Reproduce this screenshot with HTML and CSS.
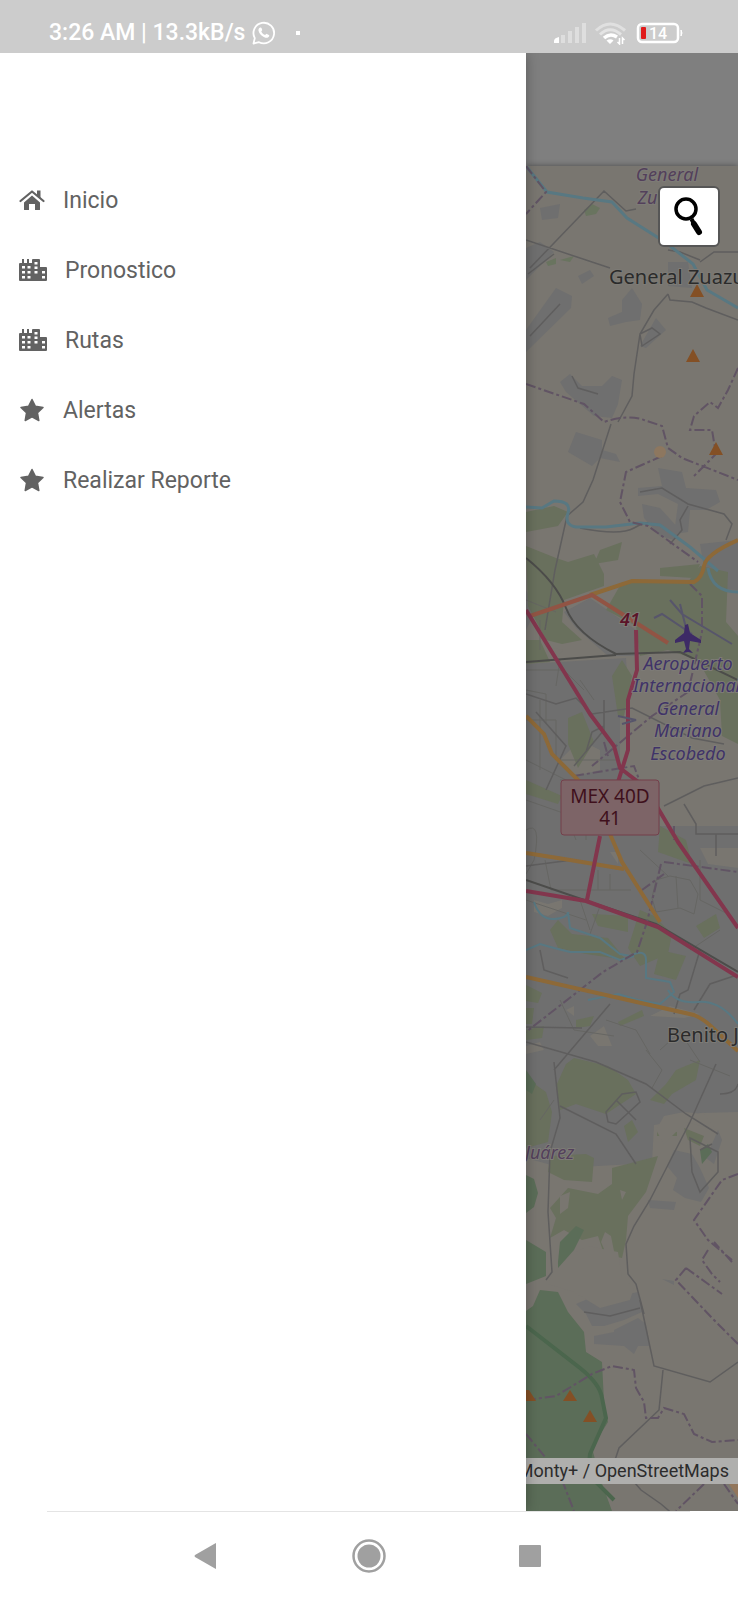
FILE: index.html
```html
<!DOCTYPE html>
<html lang="es">
<head>
<meta charset="utf-8">
<meta name="viewport" content="width=device-width, initial-scale=1">
<title>Inicio</title>
<link rel="stylesheet" href="styles.css">
</head>
<body>
<div class="screen">
  <header class="status">
    <span class="status-text">3:26 AM | 13.3kB/s</span>
    <svg class="whatsapp" viewBox="0 0 24 24" aria-hidden="true">
      <path d="M1.5 22.5l1.3-5.4A10.3 10.3 0 1 1 7 21.2z" fill="none" stroke="#fff" stroke-width="1.8" stroke-linejoin="round"/>
      <path d="M8.2 6.500c.7-.3 1.100 0 1.300.6l.7 1.700c.2.500-.5 1.200-.9 1.600.8 1.700 2.100 2.900 3.900 3.700.5-.5 1.100-1.400 1.700-1.200l2 1c.6.300.4 1.100.1 1.700-.7 1.200-2.300 1.500-3.600 1.100-3.400-1-6.200-3.600-6.900-6.900-.3-1.400.4-2.700 1.700-3.300z" fill="#fff"/>
    </svg>
    <span class="dot"></span>
    <svg class="signal" viewBox="0 0 34 24" aria-hidden="true">
      <path d="M1 22v-2q0-3 5-4v6z" fill="#fff"/>
      <path d="M8 14h4v8H8zM15 10h4v12h-4zM22 6h4v16h-4zM29 2h4v20h-4z" fill="#dedede"/>
    </svg>
    <svg class="wifi" viewBox="0 0 34 24" aria-hidden="true">
      <path d="M2 9.500Q16-3.500 31 9.500" fill="none" stroke="#e0e0e0" stroke-width="3"/>
      <path d="M6 13.500Q16 4 27 13.500" fill="none" stroke="#e4e4e4" stroke-width="3"/>
      <path d="M10 17Q16 11.500 23 16" fill="none" stroke="#fff" stroke-width="3.500"/>
      <path d="M12.500 19.500q4-2.500 7 0L16 23z" fill="#fff"/>
      <path d="M25.500 17v6l-2-2M28.500 23v-6l2 2" fill="none" stroke="#fff" stroke-width="1.500"/>
    </svg>
    <svg class="battery" viewBox="0 0 48 22" role="img" aria-label="Batería 14">
      <rect x="2" y="2" width="40" height="18" rx="4" fill="none" stroke="#fff" stroke-width="2.500"/>
      <path d="M45 8q2 3 0 6z" fill="#fff" stroke="#fff"/>
      <rect x="5" y="5" width="5" height="12" rx="1" fill="#e01a1a"/>
      <text x="13" y="17" class="battery-text">14</text>
    </svg>
  </header>

  <div class="body">
    <nav class="drawer">
      <ul class="menu">
        <li><a href="#inicio">
          <svg class="icon" viewBox="0 0 26 26" aria-hidden="true"><path d="M13 8.500L21 15.500v7q0 .5-.5.500H16v-6h-6v6H5.500q-.5 0-.5-.5v-7z"/><path d="M1.500 14L13 4.500 24.500 14" fill="none" stroke="currentColor" stroke-width="2.200" stroke-linecap="round" stroke-linejoin="round"/><path d="M18 3.500h3.500V12L18 9z"/></svg>
          <span>Inicio</span></a></li>
        <li><a href="#pronostico">
          <svg class="icon city" viewBox="0 0 28 26" aria-hidden="true"><path fill-rule="evenodd" d="M1 6h2V2h2v4h3V2h2v4h3V3q0-1 1-1h6q1 0 1 1v7h6q1 0 1 1v12q0 1-1 1H1q-1 0-1-1V7q0-1 1-1zM3 9v2.500h3V9zM8.500 9v2.500h3V9zM3 14v2.500h3V14zM8.500 14v2.500h3V14zM3 19v2.500h3V19zM8.500 19v2.500h3V19zM15.500 5v2.500h3V5zM15.500 9.500V12h3V9.500zM15.500 14v2.500h3V14zM23 14v2.500h3V14zM23 19v2.500h3V19z"/></svg>
          <span>Pronostico</span></a></li>
        <li><a href="#rutas">
          <svg class="icon city" viewBox="0 0 28 26" aria-hidden="true"><path fill-rule="evenodd" d="M1 6h2V2h2v4h3V2h2v4h3V3q0-1 1-1h6q1 0 1 1v7h6q1 0 1 1v12q0 1-1 1H1q-1 0-1-1V7q0-1 1-1zM3 9v2.500h3V9zM8.500 9v2.500h3V9zM3 14v2.500h3V14zM8.500 14v2.500h3V14zM3 19v2.500h3V19zM8.500 19v2.500h3V19zM15.500 5v2.500h3V5zM15.500 9.500V12h3V9.500zM15.500 14v2.500h3V14zM23 14v2.500h3V14zM23 19v2.500h3V19z"/></svg>
          <span>Rutas</span></a></li>
        <li><a href="#alertas">
          <svg class="icon" viewBox="0 0 26 26" aria-hidden="true"><path d="M13 2.500l3.400 6.800 7.600 1.200-5.500 5.300 1.300 7.700-6.800-3.600-6.800 3.600 1.300-7.700L2 10.500l7.600-1.200z" stroke="currentColor" stroke-width="1.500" stroke-linejoin="round"/></svg>
          <span>Alertas</span></a></li>
        <li><a href="#reporte">
          <svg class="icon" viewBox="0 0 26 26" aria-hidden="true"><path d="M13 2.500l3.400 6.800 7.600 1.200-5.500 5.300 1.300 7.700-6.800-3.600-6.800 3.600 1.300-7.700L2 10.500l7.600-1.200z" stroke="currentColor" stroke-width="1.500" stroke-linejoin="round"/></svg>
          <span>Realizar Reporte</span></a></li>
      </ul>
    </nav>

    <main class="content">
      <div class="toolbar"></div>
      <div class="map">
        <svg class="map-art" viewBox="526 166 212 1345" preserveAspectRatio="xMinYMin slice" role="img" aria-label="Mapa de Monterrey">
          <rect x="526" y="166" width="212" height="1345" fill="#797670"/>

          <g class="urban">
            <path d="M526 248l14-6 14 10-28 28zM556 288l16 8-1 12-45 44v-22zM560 382l10-8 12 12 20 0 10-10 10 4-4 24-6 14-18-2-28-24zM622 300l10-12 10 16-2 16-14 2-16 4-2 -8 14-6zM540 208l20-4-2 14-16 2zM578 276l12-6 4 6-12 8zM668 262l20 0 4 26-24-2zM576 432l26 8 0 10 14 4 4 8-20-4-8 8-24-14zM656 318l10 12-20 18-6-2z"/>
            <path d="M658 468l24 4 4 16 30 2 4 12-14 8-16 0-2 22-14 2 4-30-20-10-20 2 0-8 24-2zM642 504l18 4 20 22-6 10-14-4-16-18z"/>
            <path d="M564 612l26-14 46 32v26l-28 0-32-28zM526 590l10 20-10 20zM700 544l38-4v50q-26 0-34-22zM526 664l100-6 2 30-8 30v50l20 12 20 2v44h78v286l-38 1-20 8-26 4-2 38-90 5-36-10z"/>
            <path d="M674 1150l18 4 8 14 9 20-8 14-16-4-12-8 4-12-10-12zM648 1200l28 2-2 8-24-2zM718 1130l4 10-8 24-8-6zM576 1304l14-6 8-10 12 10 28-6 4 20-18 8-20 6-12 0-6-12zM614 1330l24-12 8 6 4 22-12 0-4 8-10-8-30-2 0-8 20-4zM662 1279l12 2 0 4z"/>
          </g>

          <g class="land">
            <path d="M534 900l14 4 14-4 0 8-14 8-14-4zM692 790l46-10v36h-42l-10-12zM700 848h38v20l-30-4zM650 1016l20-10 30 8-16 4zM590 1036l14-10 8 20-14 0zM526 1046l14-4 4 8-18 4zM566 1010l8-4 0 10zM610 852l8 0 0 12zM560 760l20-20 20 10 0 20-24 6z"/>
            <path d="M545 654l8-6 10 2-8 10z"/>
          </g>

          <g class="field">
            <path d="M526 512l28-6 14 6-10 14-32 6zM526 546l30 12 12 4 26-8 10 20 0 12-40 14-2 22 20 18-20 4-16-4-18-34zM600 550l22-8-4 18-24 4zM622 582l66 0 12-16 28 6-2 50 12 14v108l-16-8-2-36-22-40-30-10-28 6-4-30-30-16zM660 568l40-4-6 14-34-2zM526 640l14 0 10 22-24 2zM622 660l10 16-8 40-6 0-6-40zM568 718l14-6 12 30-16 26-10-24zM526 780l36 16-4 8-32-10zM660 826l26 14 6 24-34-12zM640 910l14 6 18 18-4 20-28 12-12-18zM550 930l8-10 14 14 36 4 18 22-40-6-28-6zM592 914l36 2 0 16-30-6zM696 926l20-12 4 14-16 10zM660 950l26 6-10 24-22-6z"/>
            <path d="M526 985l16 8-4 10-12-2zM576 1020l18-4-4 10-14 2zM618 1022l24-12 2 6-24 10zM526 1030l18-4-2 12-16 2zM566 1064l8-6 34 8 20 14 8 14-30 20-30-10-16 6-4-24zM526 1078l20 14 6 20-4 30-22 6zM526 1008l8 0-2 16-6 0zM666 1084l10-14 24-10-4 20-24 14-8 10-14-4zM624 1126l8-6 6 12-10 10zM550 1156l36-2 8 4-2 24-28-2-16-8zM612 1168l46-12-12 36-18 24-2 24-4 18-18-4-6-18-16 4-18-10-14 8 6-20-6-10 18-20 30 6 14-10zM657 1130l20 2 0 4-20 0zM684 1128l20 8-4 10-12-6z"/>
          </g>

          <g class="land">
            <path d="M605 1232l6 4 4 20-8 0-6-14zM620 1190l6 2-4 8zM560 1196l10-4-2 16-8 6zM548 1284l10-22 14-8 16-8 30 6 4 26 12 10-4 12-30 8-26-16zM664 1116l20-4 20 2 12 16-30-8-22 22-8-14z"/>
          </g>

          <g class="forest">
            <path d="M526 1175l8 4 4 14-4 14-8 6zM526 1240l20 12 0 24-20 8zM533 1306l7-16 18 2 10 20 16 20 2 20 16 10 2 40 4 20-16 26 8 30 12 33h-86v-200zM558 1262l2-20 16-16 8 4-10 20-16 18zM526 1070l10 14-4 10-6-4zM700 1150l8-6 4 8-10 12z"/>
            <path class="scrub" d="M584 210l8-6 8 4-4 6-10 2zM546 262l10-4 0 6-8 2zM560 260l14-4-4 6z"/>
          </g>

          <g class="blocks">
            <path d="M526 670h38l20 20M526 720h30v40h60M540 700v70M526 760l60 30v50M580 680l14 20M560 780h60M526 800l40 14 10 26M526 830q16-10 8 30l-8 14M545 860l6 30h80M598 870v20M610 874v16M640 850l28 26M526 900l60 20M606 1020l30 10 14 24M660 1050l20-18 20 30M646 1050l16 20-10 18M540 1120l14-20M690 1060l40 16M560 1000l14 30 40 6"/>
            <path d="M700 860v40l28 14M580 900l10 30M600 906l-10 28M690 950l30-20M656 880l14-4 20 4 8 14-4 20-14-6-24 4-4-14zM676 876l2 32M526 600l30 12M540 620v30M526 690l20 4v30M560 660l-4 26"/>
          </g>
          <g class="minor">
            <path d="M530 268L604 191l22 20 10-2M526 240l84 28M528 274l26-20M530 336l30-32M668 294l-14 16-14 24-6 40-2 22-14 26M668 294l2 6 22 2 14 6 32 12M700 262l14-10h24M640 334l12-6 8 6-18 12zM668 250l12 2 20 8M598 394l-20-6-6-12M611 424l-18 56-10 22-16 14-12 54-10 60M580 528q40 8 54 0t14-4M640 492l22-4 26 16 36 10 8 10-6 16M688 506l-8 14 2 10-12 14"/>
            <path d="M526 694l30 10 20-6 16 16 40-6 60 30 32 6M536 712l30 34-20 44M586 752l6-20 12-6M526 866l46-6M664 806l40-20 34-8M684 804l12 20v10h42M716 834v22M604 700v30l-30 36M700 950l-12 40-8 4-6 20M694 1010l16-26 24-8M540 950l4 20 24 8M554 1070l56-66M526 1027l56 1M526 1042l70 20 50 22 40 30 32 20M554 1062l6 56-10 34-2 60 4 60-6 8M560 1106l56 28 20 30M716 1064l-26 58-40 78-16 26-8 18 2 30 8 10 8 30M606 1112l16-18 14-2 4 10-24 22-8-2zM616 1100l20 20M690 1138l28 14v20l-18 20-8-20zM700 1150l12-6M720 1094q16 0 18-10M584 1312l26 4 30-8"/>
            <path d="M640 1300l14 66 56 16 28-20M663 1370l-4 40-40 38-4 12 26 30 20 14 14 12"/>
          </g>
          <path class="rail" d="M526 558q30 24 40 50t50 46l64-2 58 28M526 662l90-7M526 880l64 22 66 22 82 48"/>

          <path class="forest-line" d="M526 1326l54 42q20 16 22 30l4 20-16 36-2 20 26 26"/>
          <g class="water">
            <path d="M526 166l21 26 36 6 29 4 15 16 38 24 28 22 14 26 31 18M526 507l16 1 12-7q18 0 14 12t8 14h30l34-4 20 2 30 22 28 24M708 568q4 24 30 24"/>
            <path class="stream" d="M534 902q6 18 20 17t14-7l2 16 30 10 20 16 10 2q16-8 16 4t0 18l24 4 4 10-14 12-22-4-20-6-30 6M526 950l14-6 14 4 16 4h30l20 8 14-4M668 990q8 14 30 12t40 22"/>
          </g>

          <g class="border">
            <path d="M526 166l20 26-20 22M526 384l58 20 20 18q24-8 40-2l18 6 6 22 14 10 56 22M662 456l-36 16-6 30 10 20 18 4 50 36M738 368l-10 22-10 18-8-6-16 14-4 14 22 0 4 24-22 22M690 584l12 12 0 36-14 60-36 24-60 50M574 776l60-10 6 16M604 742l4 14M661 864l-14 58-10 30-34 20-77 60M664 862l74 10M674 826v14M642 890l22-16"/>
            <path d="M738 1174l-16 6-28 40 14 20 24 20M708 1250l-6 10 10 14 8 8M732 1262l-18-20M686 1268l36 26M686 1268l-10 12 36 38 26 26M526 1400l30-4 36-22 20-8 22 4 2 18 8 14 2 16h12l6-10 20 6 10 20 18 8 26-2M526 1434l20 24M562 1480l12 31M704 1484l-28 27M724 1484l14 20"/>
          </g>

          <path class="orange" d="M590 595l42-14 62 1q8-4 10-16t34-26M526 716l18 18 8 20 30 30M610 834l12 28 38 60M526 853l38 6 60 10M526 977l168 38q10 4 20 14l24 22"/>
          <path class="coral" d="M530 616l62-21 76 48"/>
          <path class="red" d="M526 610l64 104 24 32 6 22 26 20 32 54 60 86M636 630l1 40-9 30v50l-10 32M600 836l-13 64M526 891l60 10 72 26 80 50"/>
          <path d="M618 716l18 4-14 4M670 600l12 14 50 30M654 618l8-4 30 20M680 604l6 24" fill="none" stroke="#57556b" stroke-width="2"/>

          <g class="peak">
            <path d="M697 284l7 13h-14zM693 349l7 13h-14zM716 442l7 13h-14zM570 1390l7 11h-14zM590 1410l7 12h-14zM526 1390h3l7 11h-10z"/>
          </g>
          <circle cx="660" cy="452" r="6" fill="#8d775f"/>
          <path d="M729 1484h9v14z" fill="#92765b"/>
          <path d="M688 624l2 9 11 7v3l-11-2-1 8 4 4-5-1-5 1 3-4-2-8-9 2v-3l9-7 1-8z" fill="#3d2a66"/>

          <g class="place area">
            <text x="667" y="181">General</text>
            <text x="667" y="204">Zuazua</text>
            <text x="525" y="1159" class="left">Juárez</text>
          </g>
          <g class="place airport">
            <text x="688" y="670">Aeropuerto</text>
            <text x="633" y="692" class="left">Internacional</text>
            <text x="688" y="715">General</text>
            <text x="688" y="737">Mariano</text>
            <text x="688" y="760">Escobedo</text>
          </g>
          <g class="place town">
            <text x="609" y="284">General Zuazua</text>
            <text x="667" y="1042">Benito Juárez</text>
          </g>
          <text x="630" y="626" class="place ref">41</text>
          <rect x="561" y="780" width="98" height="55" rx="3" fill="#7d6467" stroke="#743f4b" stroke-width="1"/>
          <g class="place shield">
            <text x="610" y="803">MEX 40D</text>
            <text x="610" y="825">41</text>
          </g>
        </svg>
        <button class="search" type="button" aria-label="Buscar">
          <svg viewBox="0 0 40 40" aria-hidden="true"><circle cx="17" cy="12" r="10" fill="none" stroke="#000" stroke-width="3.500"/><path d="M22.500 22l2 4" stroke="#000" stroke-width="4"/><path d="M25 27l5 8" stroke="#000" stroke-width="6" stroke-linecap="round"/></svg>
        </button>
        <div class="attribution">Monty+ / OpenStreetMaps</div>
      </div>
    </main>
  </div>

  <footer class="system">
    <div class="divider"></div>
    <div class="keys">
      <button type="button" aria-label="Atrás"><svg viewBox="0 0 44 44" aria-hidden="true"><path d="M31 10v24q0 1.500-1 .5L10 23q-1-1 0-2L30 9.500q1-1 1 .5z"/></svg></button>
      <button type="button" aria-label="Inicio"><svg viewBox="0 0 44 44" aria-hidden="true"><circle cx="22" cy="22" r="11.500"/><circle cx="22" cy="22" r="15.500" fill="none" stroke="#a0a0a0" stroke-width="2.500"/></svg></button>
      <button type="button" aria-label="Recientes"><svg viewBox="0 0 44 44" aria-hidden="true"><rect x="10" y="11" width="22" height="22" rx="1"/></svg></button>
    </div>
  </footer>
</div>
</body>
</html>
```

FILE: styles.css
```css
* { box-sizing: border-box; }

body {
  margin: 0;
  background: #fff;
  font-family: Roboto, "Noto Sans", sans-serif;
}

button {
  padding: 0;
  border: 0;
  background: none;
}

svg { display: block; }

.screen {
  display: flex;
  flex-direction: column;
  min-height: 100vh;
}

/* Status bar */
.status {
  display: flex;
  align-items: center;
  height: 53px;
  padding: 13px 54px 0 49px;
  background: #ccc;
  color: #fff;
}

.status-text {
  font-size: 23px;
  font-weight: 500;
  line-height: 28px;
  white-space: nowrap;
}

.whatsapp {
  width: 24px;
  height: 24px;
  margin-left: 7px;
}

.dot {
  width: 4px;
  height: 4px;
  margin-left: 20px;
  background: #fff;
}

.signal {
  width: 34px;
  height: 24px;
  margin-left: auto;
}

.wifi {
  width: 34px;
  height: 24px;
  margin-left: 7px;
}

.battery {
  width: 48px;
  height: 22px;
  margin-left: 8px;
}

.battery-text {
  fill: #fff;
  font-size: 16px;
  font-weight: 500;
}

/* Drawer */
.body {
  display: flex;
  flex: 1;
  overflow: hidden;
}

.drawer {
  position: relative;
  z-index: 1;
  flex: 0 0 71.3%;
  padding-top: 112px;
  background: #fff;
  box-shadow: 0 0 12px rgba(0, 0, 0, 0.3);
}

.menu {
  margin: 0;
  padding: 0;
  list-style: none;
}

.menu a {
  display: flex;
  align-items: center;
  gap: 18px;
  height: 70px;
  padding: 0 19px;
  color: #626262;
  font-size: 23px;
  text-decoration: none;
}

.icon {
  width: 26px;
  height: 26px;
  fill: currentColor;
}

.city { width: 28px; }

/* Map */
.content {
  display: flex;
  flex: 1;
  flex-direction: column;
  min-width: 0;
}

.toolbar {
  height: 113px;
  background: #7f7f7f;
}

.map {
  position: relative;
  display: flex;
  flex: 1;
  flex-direction: column;
  background: #797670;
  box-shadow: 0 0 6px rgba(0, 0, 0, 0.4);
}

.map-art {
  flex: 1 0 auto;
  width: 100%;
}

.urban { fill: #6f6f6f; }
.land { fill: #797670; }
.field { fill: #69705d; }
.forest { fill: #5b6d58; }
.scrub { fill: #69745f; }

.minor, .blocks, .rail, .water, .border, .orange, .coral, .red, .forest-line { fill: none; }
.minor { stroke: #5f5e5e; stroke-width: 1.5; }
.blocks { stroke: #666663; stroke-width: 1; }
.rail { stroke: #4c4c4a; stroke-width: 2; }
.forest-line { stroke: #4b664d; stroke-width: 4; }
.water { stroke: #587882; stroke-width: 3; }
.stream { stroke-width: 2; }
.border { stroke: #615464; stroke-width: 2; stroke-dasharray: 10 3 3 3; }
.orange { stroke: #8d6938; stroke-width: 4; }
.coral { stroke: #915444; stroke-width: 4; }
.red { stroke: #82364d; stroke-width: 4; stroke-linejoin: round; }
.peak { fill: #845025; }

.place {
  font-family: "Noto Sans", sans-serif;
  font-size: 18px;
  font-style: italic;
  text-anchor: middle;
  paint-order: stroke;
  stroke: #7d7b76;
  stroke-width: 2px;
}

.area { fill: #53405b; }
.airport { fill: #403368; }
.left { text-anchor: start; }

.town {
  fill: #2b2b2b;
  font-size: 20px;
  font-style: normal;
  text-anchor: start;
}

.ref {
  fill: #5b1428;
  font-weight: 600;
}

.shield {
  fill: #3f101c;
  font-size: 19px;
  font-style: normal;
  stroke: none;
}

.search {
  position: absolute;
  top: 20px;
  right: 18px;
  display: grid;
  place-items: center;
  width: 62px;
  height: 61px;
  border: 2px solid #565656;
  border-radius: 6px;
  background: #fff;
}

.search svg {
  width: 40px;
  height: 40px;
}

.attribution {
  position: absolute;
  right: 0;
  bottom: 27px;
  padding: 0 9px 1px;
  background: #afafad;
  color: #2c2c2c;
  font-size: 18px;
  line-height: 25px;
  white-space: nowrap;
}

/* System navigation */
.divider {
  height: 1px;
  margin: 0 48px 0 47px;
  background: #e4e4e4;
}

.keys {
  display: flex;
  justify-content: center;
  gap: 118px;
  padding: 22px 0;
}

.keys button {
  width: 44px;
  height: 44px;
}

.keys svg { fill: #a0a0a0; }
```
